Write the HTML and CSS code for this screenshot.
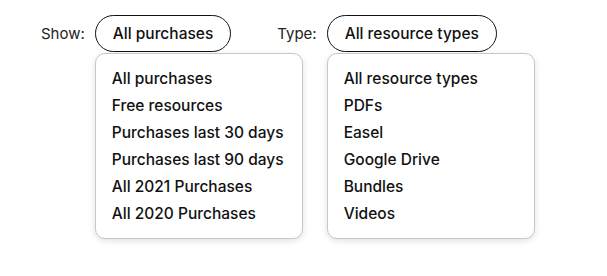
FILE: index.html
```html
<!DOCTYPE html>
<html>
<head>
<meta charset="utf-8">
<link rel="stylesheet" href="styles.css">
</head>
<body>
<div class="filters">
  <div class="filter">
    <span class="label">Show:</span>
    <div class="dropdown">
      <button class="pill">All purchases</button>
      <ul class="menu">
        <li>All purchases</li>
        <li>Free resources</li>
        <li>Purchases last 30 days</li>
        <li>Purchases last 90 days</li>
        <li>All 2021 Purchases</li>
        <li>All 2020 Purchases</li>
      </ul>
    </div>
  </div>
  <div class="filter">
    <span class="label">Type:</span>
    <div class="dropdown">
      <button class="pill">All resource types</button>
      <ul class="menu">
        <li>All resource types</li>
        <li>PDFs</li>
        <li>Easel</li>
        <li>Google Drive</li>
        <li>Bundles</li>
        <li>Videos</li>
      </ul>
    </div>
  </div>
</div>
</body>
</html>
```
FILE: styles.css
```css
html, body {
  margin: 0;
  background: #fff;
}
body {
  min-height: 276px;
  font-family: Inter, "Noto Sans", sans-serif;
  color: #111;
}
.filters {
  display: flex;
  align-items: flex-start;
  gap: 46px;
  padding: 15px 0 0 41px;
}
.filter {
  display: flex;
  align-items: center;
  gap: 10px;
}
.label {
  font-size: 15px;
  font-weight: 400;
  color: #222;
}
.dropdown {
  position: relative;
  display: flex;
}
.pill {
  height: 37px;
  box-sizing: border-box;
  padding: 0 17px;
  border: 1.5px solid #111;
  border-radius: 19px;
  background: #fff;
  font-family: inherit;
  font-size: 15.5px;
  font-weight: 500;
  color: #111;
  white-space: nowrap;
}
.menu {
  position: absolute;
  top: 38px;
  left: 0;
  width: 208px;
  height: 186px;
  box-sizing: border-box;
  margin: 0;
  padding: 11px 0 0 16px;
  list-style: none;
  background: #fff;
  border: 1px solid #c8c8c8;
  border-radius: 10px;
  box-shadow: 0 2px 6px rgba(0,0,0,0.12);
}
.menu li {
  height: 27px;
  line-height: 27px;
  font-size: 15.5px;
  font-weight: 500;
  color: #111;
  white-space: nowrap;
}
```
